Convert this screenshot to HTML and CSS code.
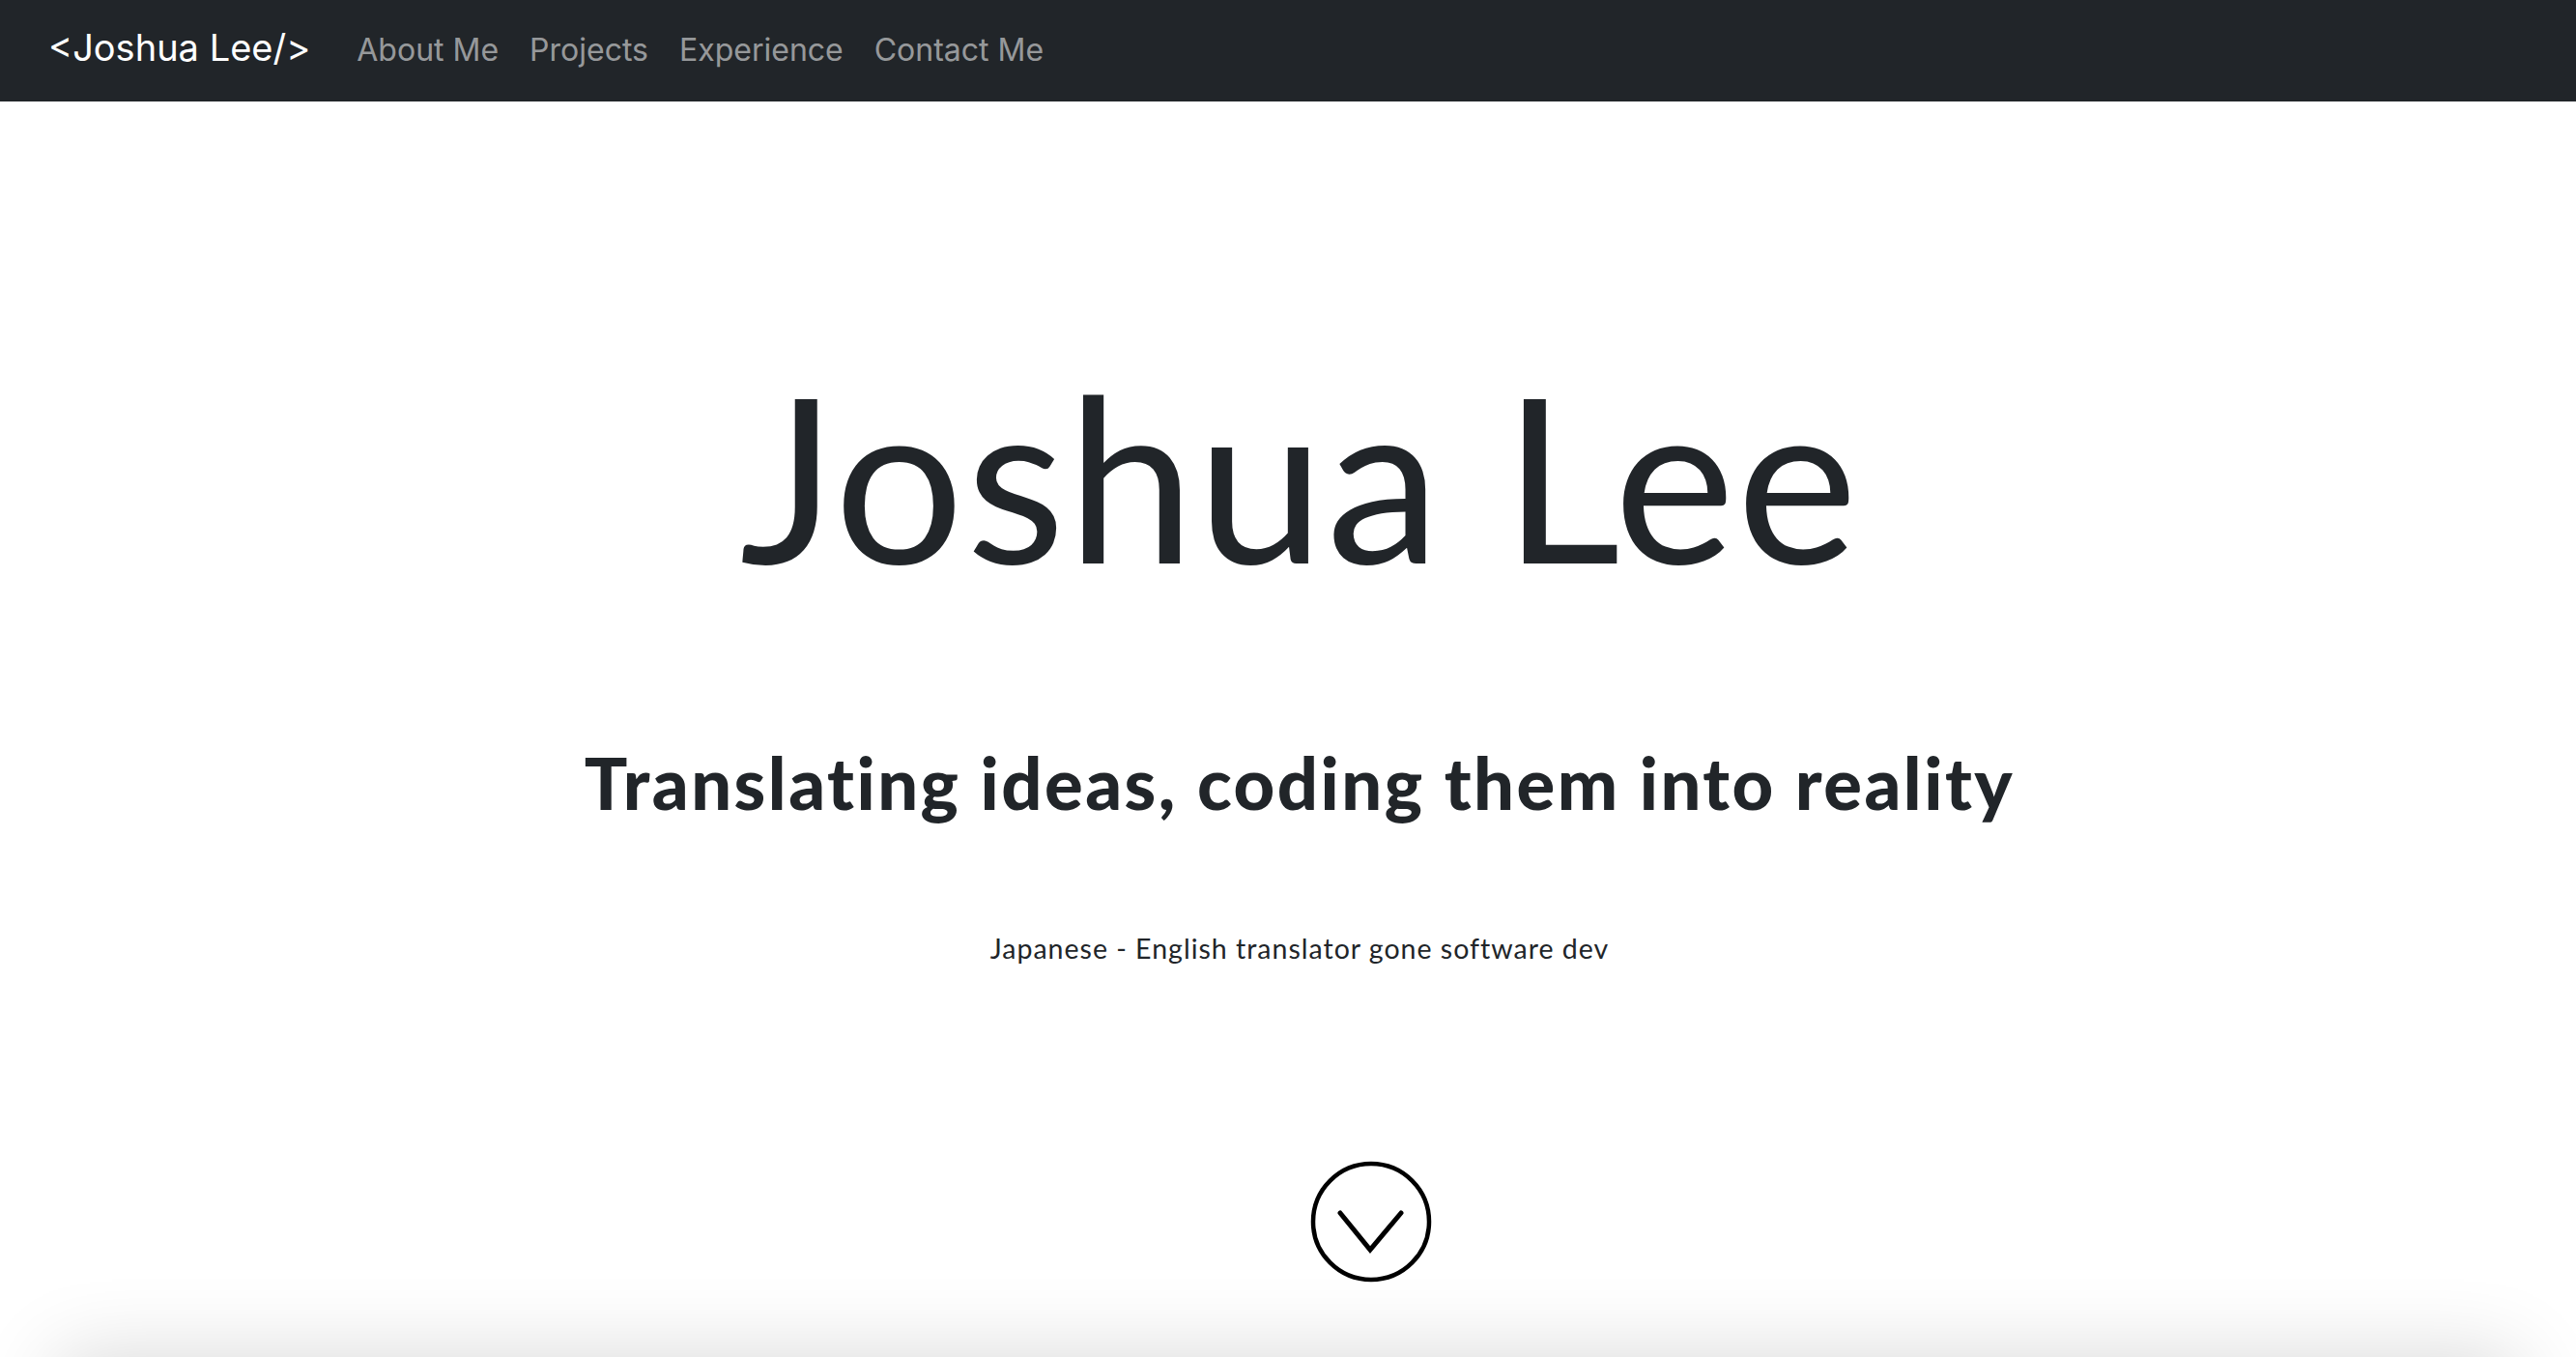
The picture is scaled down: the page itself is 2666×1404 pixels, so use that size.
FILE: index.html
```html
<!DOCTYPE html>
<html lang="en">
<head>
<meta charset="utf-8">
<title>Joshua Lee</title>
<link rel="stylesheet" href="styles.css">
</head>
<body>
<nav class="navbar">
  <a class="brand" href="#">&lt;Joshua Lee/&gt;</a>
  <ul class="nav-links">
    <li><a href="#about">About Me</a></li>
    <li><a href="#projects">Projects</a></li>
    <li><a href="#experience">Experience</a></li>
    <li><a href="#contact">Contact Me</a></li>
  </ul>
</nav>
<header class="hero">
  <h1 class="hero-title">Joshua Lee</h1>
  <h2 class="hero-subtitle">Translating ideas, coding them into reality</h2>
  <p class="hero-tagline">Japanese - English translator gone software dev</p>
  <div class="scroll-row">
    <a class="scroll-down" href="#about" aria-label="Scroll down">
      <svg width="128" height="128" viewBox="0 0 128 128" fill="none" stroke="#000" stroke-linecap="round" stroke-linejoin="miter">
        <circle cx="64" cy="64" r="60" stroke-width="4.5"/>
        <polyline points="32,55 63,93 95,55" stroke-width="5"/>
      </svg>
    </a>
  </div>
</header>
<section class="about" id="about"></section>
</body>
</html>
```
FILE: styles.css
```css
html, body {
  margin: 0;
  padding: 0;
  background: #ffffff;
  overflow: hidden;
}

body {
  font-family: "Lato", "Liberation Sans", sans-serif;
  color: #212529;
}

.navbar {
  box-sizing: border-box;
  height: 105px;
  background: #212529;
  display: flex;
  align-items: baseline;
  padding: 19px 0 0 50px;
  font-family: "Inter", "Liberation Sans", sans-serif;
}

.brand {
  color: #ffffff;
  font-size: 38px;
  line-height: 60px;
  text-decoration: none;
  margin-right: 32px;
}

.nav-links {
  list-style: none;
  margin: 0;
  padding: 0;
  display: flex;
  align-items: baseline;
}

.nav-links a {
  display: block;
  padding: 0 16px;
  font-size: 32px;
  line-height: 48px;
  color: rgba(255, 255, 255, 0.55);
  text-decoration: none;
}

.hero {
  box-sizing: border-box;
  height: 1299px;
  display: flex;
  flex-direction: column;
  align-items: center;
  padding: 268px 0 0 24px;
}

.hero-title {
  margin: 0;
  font-family: "Lato", sans-serif;
  font-weight: 400;
  font-size: 237px;
  line-height: 237px;
  letter-spacing: 2px;
  color: #212529;
}

.hero-subtitle {
  margin: 155px 0 0;
  font-family: "Lato", sans-serif;
  font-weight: 900;
  font-size: 74px;
  line-height: 89px;
  letter-spacing: 2.5px;
  color: #212529;
}

.hero-tagline {
  margin: 110px 0 0;
  font-family: "Lato", sans-serif;
  font-size: 28.5px;
  line-height: 34px;
  letter-spacing: 1px;
  color: #212529;
}

.scroll-row {
  margin-top: 202px;
  display: flex;
  justify-content: center;
  padding-left: 148px;
}

.scroll-down {
  display: block;
  width: 128px;
  height: 128px;
}

.scroll-down svg {
  display: block;
}

.about {
  margin: 0 60px;
  height: 600px;
  background: #ffffff;
  box-shadow: 0 0 80px rgba(0, 0, 0, 0.16);
}
```
